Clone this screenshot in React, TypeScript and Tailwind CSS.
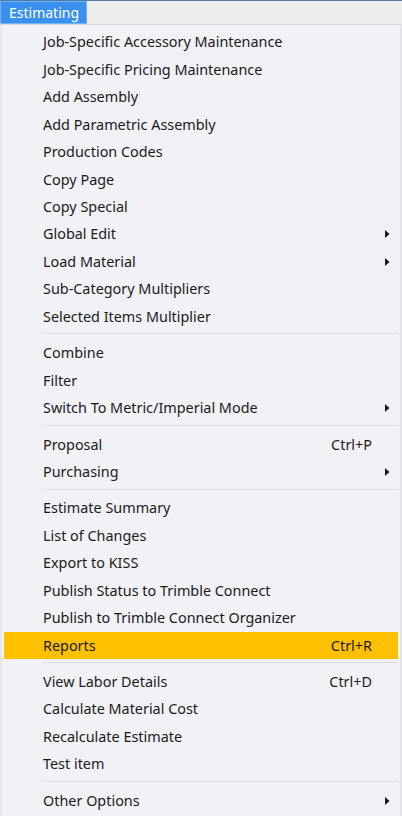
import React from "react";

type Item =
  | { kind: "item"; label: string; shortcut?: string; submenu?: boolean; active?: boolean }
  | { kind: "sep" };

const items: Item[] = [
  { kind: "item", label: "Job-Specific Accessory Maintenance" },
  { kind: "item", label: "Job-Specific Pricing Maintenance" },
  { kind: "item", label: "Add Assembly" },
  { kind: "item", label: "Add Parametric Assembly" },
  { kind: "item", label: "Production Codes" },
  { kind: "item", label: "Copy Page" },
  { kind: "item", label: "Copy Special" },
  { kind: "item", label: "Global Edit", submenu: true },
  { kind: "item", label: "Load Material", submenu: true },
  { kind: "item", label: "Sub-Category Multipliers" },
  { kind: "item", label: "Selected Items Multiplier" },
  { kind: "sep" },
  { kind: "item", label: "Combine" },
  { kind: "item", label: "Filter" },
  { kind: "item", label: "Switch To Metric/Imperial Mode", submenu: true },
  { kind: "sep" },
  { kind: "item", label: "Proposal", shortcut: "Ctrl+P" },
  { kind: "item", label: "Purchasing", submenu: true },
  { kind: "sep" },
  { kind: "item", label: "Estimate Summary" },
  { kind: "item", label: "List of Changes" },
  { kind: "item", label: "Export to KISS" },
  { kind: "item", label: "Publish Status to Trimble Connect" },
  { kind: "item", label: "Publish to Trimble Connect Organizer" },
  { kind: "item", label: "Reports", shortcut: "Ctrl+R", active: true },
  { kind: "sep" },
  { kind: "item", label: "View Labor Details", shortcut: "Ctrl+D" },
  { kind: "item", label: "Calculate Material Cost" },
  { kind: "item", label: "Recalculate Estimate" },
  { kind: "item", label: "Test item" },
  { kind: "sep" },
  { kind: "item", label: "Other Options", submenu: true },
];

function Arrow() {
  return (
    <svg width="5" height="8" viewBox="0 0 5 8" className="block">
      <path d="M0 0 L4.5 4 L0 8 Z" fill="#1a1a1a" />
    </svg>
  );
}

export default function App() {
  return (
    <div
      className="w-[402px] h-[816px] overflow-hidden bg-[#f1f1f6] text-[#1b1b1b] flex flex-col"
      style={{ fontFamily: '"Segoe UI", "Noto Sans", "Open Sans", sans-serif' }}
    >
      <div className="h-px bg-[#4d78a6]" />
      <div className="h-[23px] bg-[#eeeeee] flex items-stretch">
        <div className="w-[87px] bg-[#3a90ee] border border-[#74b3f3] text-white text-[14px] leading-none flex items-center pl-[8px]">
          Estimating
        </div>
      </div>
      <div className="flex-1 flex flex-col border-t border-[#d6d6d6] border-l-2 border-l-[#e7e7ea] border-r-2 border-r-[#e4e4e8] pt-[3.5px] px-[2px]">
        {items.map((it, i) =>
          it.kind === "sep" ? (
            <div key={i} className="h-[9px] pt-[3px] pl-[39px]">
              <div className="h-px bg-[#dedee2]" />
            </div>
          ) : (
            <div
              key={i}
              className={`h-[27.45px] shrink-0 flex items-center text-[14.4px] ${
                it.active ? "bg-[#ffc000]" : ""
              }`}
            >
              <span className="pl-[39px] flex-1 whitespace-nowrap">{it.label}</span>
              {it.shortcut && <span className="mr-[26px] whitespace-nowrap">{it.shortcut}</span>}
              {it.submenu && (
                <span className="mr-[8px] flex items-center">
                  <Arrow />
                </span>
              )}
            </div>
          )
        )}
      </div>
    </div>
  );
}
